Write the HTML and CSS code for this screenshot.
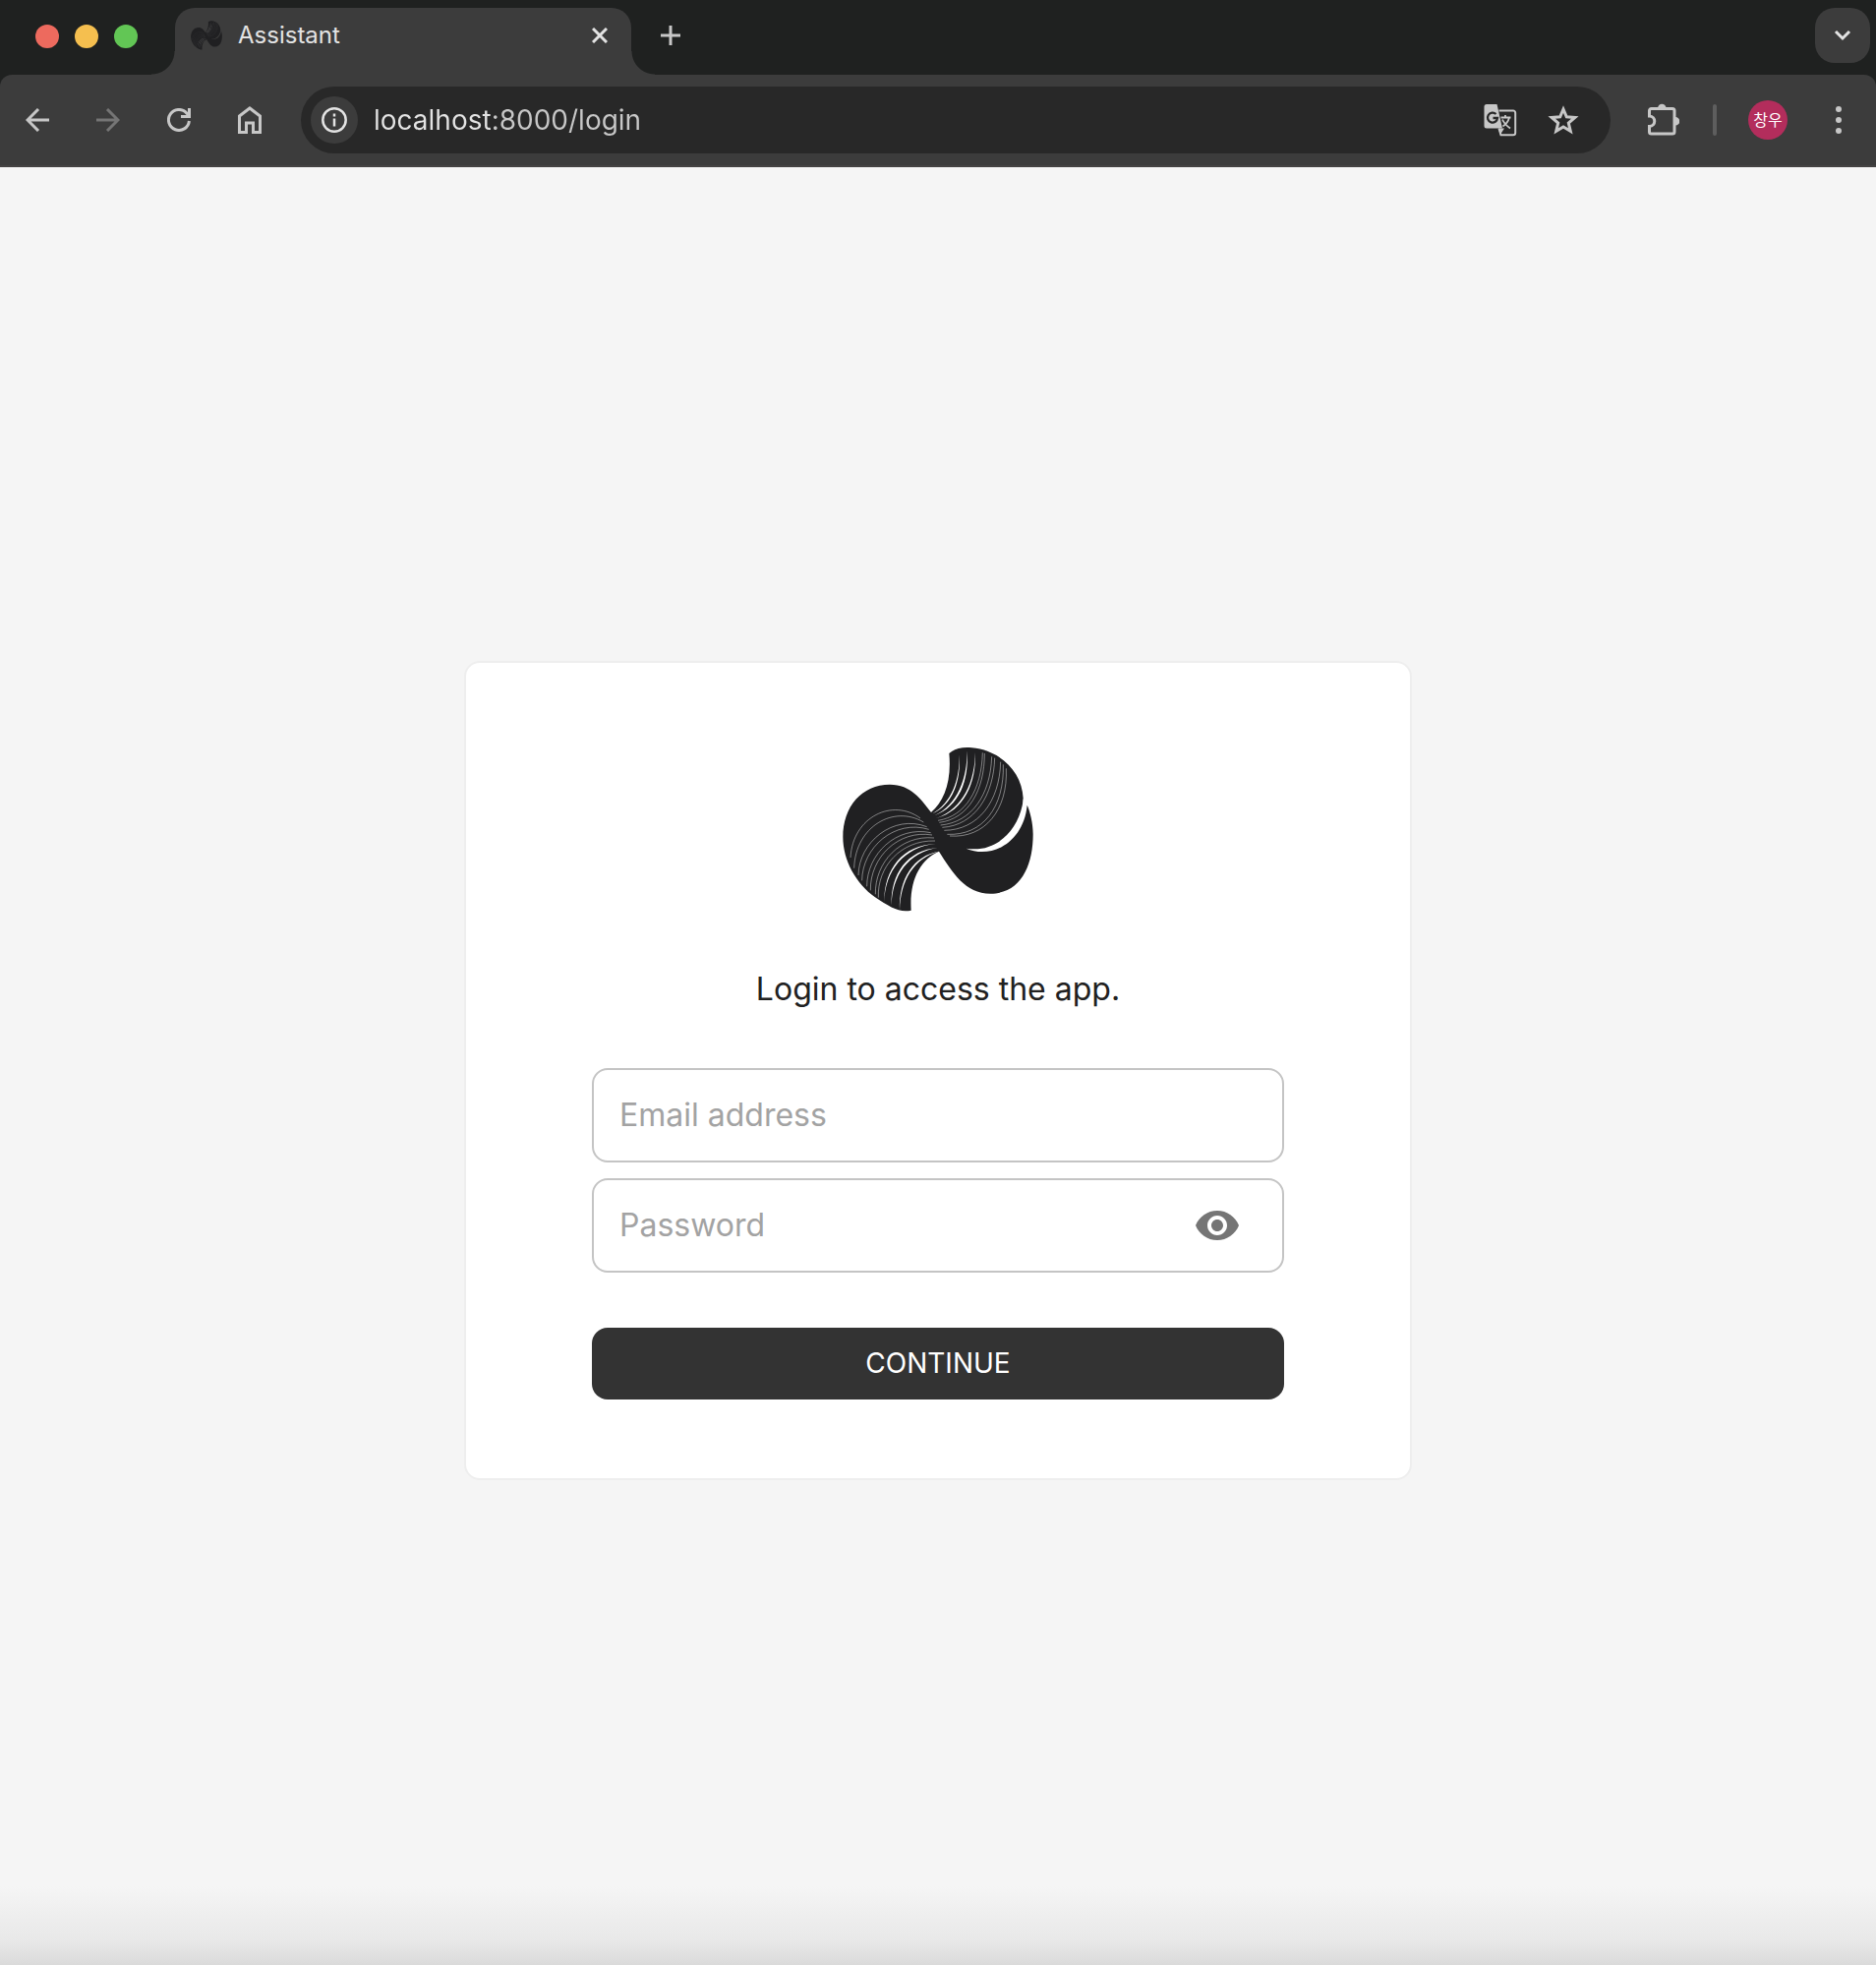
FILE: index.html
```html
<!DOCTYPE html>
<html lang="en">
<head>
<meta charset="utf-8">
<meta name="viewport" content="width=device-width, initial-scale=1">
<title>Assistant</title>
<link rel="stylesheet" href="styles.css">
</head>
<body>
<header class="browser">
  <div class="tabstrip">
    <div class="lights">
      <span class="light light-red"></span>
      <span class="light light-yellow"></span>
      <span class="light light-green"></span>
    </div>
    <div class="tab">
      <svg class="favicon" viewBox="50 56 584 510" preserveAspectRatio="none" aria-hidden="true"><use href="#mark"/></svg>
      <span class="tab-title">Assistant</span>
      <button class="icon-btn tab-close" type="button" aria-label="Close tab">
        <svg width="16" height="16" viewBox="0 0 16 16" stroke="#e3e3e3" stroke-width="3"><path d="M1 1l14 14M15 1L1 15"/></svg>
      </button>
    </div>
    <button class="icon-btn new-tab" type="button" aria-label="New tab">
      <svg width="20" height="20" viewBox="0 0 20 20" stroke="#c7c7c7" stroke-width="3"><path d="M10 0v20M0 10h20"/></svg>
    </button>
    <button class="icon-btn tab-search" type="button" aria-label="Search tabs">
      <svg width="18" height="12" viewBox="0 0 18 12" fill="none" stroke="#e3e3e3" stroke-width="3"><path d="M2 2l7 7 7-7"/></svg>
    </button>
  </div>
  <div class="toolbar">
    <button class="icon-btn nav-btn" type="button" aria-label="Back">
      <svg width="24" height="24" viewBox="0 0 24 24" fill="none" stroke="#c7c7c7" stroke-width="3"><path d="M24 12H2M13 1L2 12l11 11"/></svg>
    </button>
    <button class="icon-btn nav-btn" type="button" aria-label="Forward">
      <svg width="24" height="24" viewBox="0 0 24 24" fill="none" stroke="#757575" stroke-width="3"><path d="M0 12h22M11 1l11 11-11 11"/></svg>
    </button>
    <button class="icon-btn nav-btn" type="button" aria-label="Reload">
      <svg width="24" height="24" viewBox="0 0 24 24" fill="none" stroke="#c7c7c7" stroke-width="3"><path d="M22.4 13A10.5 10.5 0 1 1 20 5.200L22 8"/><path d="M22.500 0v8.500H14"/></svg>
    </button>
    <button class="icon-btn nav-btn" type="button" aria-label="Home">
      <svg width="24" height="28" viewBox="0 0 24 28" fill="none" stroke="#c7c7c7" stroke-width="3"><path d="M1.500 10L12 2l10.500 8v16.500h-7V17h-7v9.500h-7z"/></svg>
    </button>
    <form class="omnibox">
      <button class="icon-btn site-info" type="button" aria-label="View site information">
        <svg width="26" height="26" viewBox="0 0 26 26" fill="none" stroke="#e3e3e3" stroke-width="2.500"><circle cx="13" cy="13" r="11.700"/><path d="M13 11.500v8M13 6.500v3"/></svg>
      </button>
      <input class="address" type="text" value="localhost:8000/login" aria-label="Address" spellcheck="false">
      <button class="icon-btn omni-btn" type="button" aria-label="Translate this page">
        <svg width="34" height="34" viewBox="0 0 34 34"><path d="M3 1h10.500l5.500 24.500H3a2.500 2.500 0 0 1-2.500-2.500V3.500A2.500 2.500 0 0 1 3 1z" fill="#c7c7c7"/><path d="M15.500 7.500H30a2.200 2.200 0 0 1 2.200 2.200V30a2.200 2.200 0 0 1-2.200 2.200H17.500l-2-6.500" fill="none" stroke="#c7c7c7" stroke-width="2"/><path d="M15 25.500h6l-4.200 6.500z" fill="#c7c7c7"/><path d="M17.500 14.500h10M22 12v2.500M26 14.500c-1 4-3.500 7-6.500 9M19 16.500c1.500 3.500 4.500 6.500 8 9" fill="none" stroke="#c7c7c7" stroke-width="1.800"/><path d="M12.500 11A5 5 0 1 0 14 15H9.500" fill="none" stroke="#282828" stroke-width="2.300"/></svg>
      </button>
      <button class="icon-btn omni-btn" type="button" aria-label="Bookmark this tab">
        <svg width="32" height="30" viewBox="0 0 32 30" fill="none" stroke="#c7c7c7" stroke-width="3"><path d="M16 4l3.300 7.800 8.500.700-6.500 5.500 2 8.300L16 22l-7.300 4.300 2-8.300-6.500-5.500 8.500-.700z"/></svg>
      </button>
    </form>
    <button class="icon-btn nav-btn" type="button" aria-label="Extensions">
      <svg width="32" height="34" viewBox="0 0 32 34"><path d="M3.500 5.500H25a2 2 0 0 1 2 2V29a2 2 0 0 1-2 2H3.500a2 2 0 0 1-2-2v-5.500c7-.500 7-10 0-10.500V7.500a2 2 0 0 1 2-2z" fill="none" stroke="#c7c7c7" stroke-width="3"/><path d="M10 5a4.300 4.300 0 0 1 8.600 0zM28 14a4.300 4.300 0 0 1 0 8.600z" fill="#c7c7c7"/></svg>
    </button>
    <span class="divider"></span>
    <button class="avatar" type="button">창우</button>
    <button class="icon-btn nav-btn" type="button" aria-label="Menu">
      <svg width="6" height="28" viewBox="0 0 6 28" fill="#c7c7c7"><circle cx="3" cy="3" r="3"/><circle cx="3" cy="14" r="3"/><circle cx="3" cy="25" r="3"/></svg>
    </button>
  </div>
</header>
<main class="page">
  <form class="card">
    <svg class="logo" viewBox="-3 0 690 630" role="img" aria-label="Assistant logo">
      <g id="mark">
        <path fill="#202022" d="M376 78C392 64 415 58 445 61C530 68 598 132 602 215C600 222 601 230 599 238C580 325 510 382 428 368C505 402 603 350 614 236C622 252 632 290 632 325C632 420 595 506 502 506C425 506 385 440 345 377C290 402 254 460 260 557C225 565 195 547 150 517C92 475 52 405 52 333C52 240 110 173 195 173C260 173 290 218 321 258C360 225 384 165 376 78Z"/>
        <g fill="currentColor">
          <path d="M325 262C382 230 409 160 407 82C413 160 387 236 325 262Z"/>
          <path d="M331 268C402 235 431 155 431 70C437 160 407 241 331 268Z"/>
          <path d="M337 276C419 245 454 165 456 74C459 169 422 252 337 276Z"/>
          <path d="M345 377C268 390 222 460 225 556C228 465 268 398 345 377Z"/>
          <path d="M342 366C248 373 197 445 200 542C202 450 252 380 342 366Z"/>
          <path d="M335 354C235 357 177 430 178 532C180 436 239 363 335 354Z"/>
        </g>
        <g fill="none" stroke="currentColor" stroke-width="2" stroke-opacity=".65">
          <path d="M342 283C425 270 475 190 478 76"/>
          <path d="M346 289C435 278 484 190 484 78"/>
          <path d="M350 297C445 288 502 205 506 88"/>
          <path d="M355 304C455 298 512 205 515 92"/>
          <path d="M361 313C465 312 530 225 533 104"/>
          <path d="M370 325C480 330 545 240 541 112"/>
          <path d="M378 330C485 338 556 250 550 124"/>
          <path d="M333 345C228 342 156 425 160 518"/>
          <path d="M330 336C228 326 149 410 151 508"/>
          <path d="M324 327C222 310 134 395 136 496"/>
          <path d="M320 320C215 298 125 385 125 484"/>
          <path d="M314 310C210 278 111 365 110 466"/>
          <path d="M308 302C205 262 100 350 99 450"/>
          <path d="M298 288C208 234 90 300 86 428"/>
          <path d="M288 276C205 214 82 270 75 396"/>
        </g>
      </g>
    </svg>
    <h1 class="heading">Login to access the app.</h1>
    <div class="fields">
      <div class="field">
        <input class="field-input" type="email" placeholder="Email address" aria-label="Email address">
      </div>
      <div class="field">
        <input class="field-input" type="password" placeholder="Password" aria-label="Password">
        <button class="icon-btn reveal" type="button" aria-label="Show password">
          <svg width="48" height="48" viewBox="0 0 24 24" fill="#757575"><path d="M12 4.500C7 4.500 2.730 7.610 1 12c1.730 4.390 6 7.500 11 7.500s9.270-3.110 11-7.500c-1.730-4.390-6-7.500-11-7.500zM12 17c-2.760 0-5-2.240-5-5s2.240-5 5-5 5 2.240 5 5-2.240 5-5 5zm0-8c-1.660 0-3 1.340-3 3s1.340 3 3 3 3-1.340 3-3-1.340-3-3-3z"/></svg>
        </button>
      </div>
    </div>
    <button class="submit" type="submit">CONTINUE</button>
  </form>
</main>
</body>
</html>
```
FILE: styles.css
```css
* {
  box-sizing: border-box;
}

body {
  display: flex;
  flex-direction: column;
  min-height: 100vh;
  margin: 0;
  font-family: Inter, "Noto Sans CJK KR", sans-serif;
  background: #f5f5f5;
}

button,
input {
  margin: 0;
  padding: 0;
  border: 0;
  background: none;
  font: inherit;
}

svg {
  display: block;
}

.icon-btn {
  display: flex;
  flex: none;
  align-items: center;
  justify-content: center;
}

/* Browser chrome */
.browser {
  background: #1f2120;
}

.tabstrip {
  display: flex;
  align-items: flex-start;
  height: 76px;
  padding: 8px 6px 0 36px;
}

.lights {
  display: flex;
  gap: 16px;
  width: 142px;
  padding-top: 17px;
}

.light {
  width: 24px;
  height: 24px;
  border-radius: 50%;
}

.light-red {
  background: #ed6a5e;
}

.light-yellow {
  background: #f5bf4f;
}

.light-green {
  background: #62c655;
}

.tab {
  position: relative;
  display: flex;
  align-items: center;
  width: 464px;
  height: 68px;
  padding: 0 16px 12px;
  border-radius: 20px 20px 0 0;
  background: #3c3c3c;
}

.tab::before,
.tab::after {
  content: "";
  position: absolute;
  bottom: 0;
  width: 24px;
  height: 24px;
}

.tab::before {
  right: 100%;
  background: radial-gradient(circle at 0 0, #1f2120 23px, #3c3c3c 24px);
}

.tab::after {
  left: 100%;
  background: radial-gradient(circle at 100% 0, #1f2120 23px, #3c3c3c 24px);
}

.favicon {
  width: 32px;
  height: 30px;
  color: #6a6a6a;
}

.tab-title {
  flex: 1;
  padding-left: 16px;
  color: #e3e3e3;
  font-size: 24px;
  line-height: 32px;
}

.tab-close {
  width: 32px;
  height: 32px;
}

.new-tab {
  width: 56px;
  height: 56px;
  margin-left: 12px;
}

.tab-search {
  width: 56px;
  height: 56px;
  margin-left: auto;
  border-radius: 20px;
  background: #3c3c3c;
}

.toolbar {
  display: flex;
  align-items: center;
  height: 94px;
  padding: 0 2px;
  border-bottom: 2px solid #444242;
  border-radius: 12px 12px 0 0;
  background: #3c3c3c;
}

.nav-btn {
  width: 72px;
  height: 56px;
}

.omnibox {
  display: flex;
  flex: 1;
  align-items: center;
  height: 68px;
  margin: 0 18px 0 16px;
  padding: 0 16px 0 10px;
  border-radius: 34px;
  background: #282828;
}

.site-info {
  width: 48px;
  height: 48px;
  border-radius: 50%;
  background: #3c3c3c;
}

/* The host is brighter than the rest of the address */
.address {
  flex: 1;
  min-width: 0;
  margin-left: 16px;
  height: 48px;
  color: #c7c7c7;
  font-size: 28px;
  background: linear-gradient(90deg, #e3e3e3 120px, #c7c7c7 120px);
  background-clip: text;
  -webkit-text-fill-color: transparent;
}

.omni-btn {
  width: 64px;
  height: 48px;
}

.divider {
  width: 4px;
  height: 32px;
  margin: 0 32px 0 14px;
  border-radius: 2px;
  background: #5e5e5e;
}

.avatar {
  width: 40px;
  height: 40px;
  margin-right: 16px;
  border-radius: 50%;
  background: #b32d5c;
  color: #fff;
  font-size: 16px;
  line-height: 40px;
  text-align: center;
}

/* Login page */
.page {
  display: flex;
  flex: 1;
  align-items: center;
  justify-content: center;
  padding: 32px 24px 24px;
  background: linear-gradient(to top, #dadada, #e8e8e8 24px, #f5f5f5 80px);
}

.card {
  display: flex;
  flex-direction: column;
  width: 100%;
  max-width: 964px;
  padding: 66px 128px 80px;
  border: 2px solid #eee;
  border-radius: 16px;
  background: #fff;
}

.logo {
  align-self: center;
  width: 230px;
  height: 210px;
  color: #fff;
}

.heading {
  margin: 32px 0 56px;
  color: #212121;
  font-size: 32px;
  font-weight: 400;
  line-height: 48px;
  text-align: center;
}

.fields {
  display: flex;
  flex-direction: column;
  gap: 16px;
}

.field {
  display: flex;
  align-items: center;
  height: 96px;
  padding: 0 26px;
  border: 2px solid #c4c4c4;
  border-radius: 16px;
}

.field-input {
  flex: 1;
  min-width: 0;
  height: 64px;
  color: #212121;
  font-size: 32px;
  outline: 0;
}

.field-input::placeholder {
  color: #a3a3a3;
}

.reveal {
  width: 80px;
  height: 80px;
}

.submit {
  height: 73px;
  margin-top: 56px;
  border-radius: 16px;
  background: #333;
  color: #fff;
  font-size: 28px;
  line-height: 48px;
}
```
